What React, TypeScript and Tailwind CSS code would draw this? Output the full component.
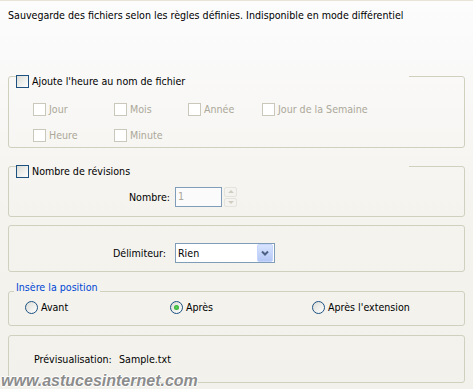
import clsx from "clsx";

// XP-style controls, drawn with borders and gradients
function Check({ disabled }: { disabled?: boolean }) {
  return (
    <span
      className={clsx(
        "block size-[13px] shrink-0 border",
        disabled
          ? "border-[#cac8bb] bg-white"
          : "border-[#1c5180] bg-[linear-gradient(135deg,#dcdcd7,#ffffff)]"
      )}
    />
  );
}

function CheckItem({ label, disabled }: { label: string; disabled?: boolean }) {
  return (
    <div className="flex h-[13px] items-center gap-[3px]">
      <Check disabled={disabled} />
      <span className={clsx("leading-[13px]", disabled ? "text-[#aca899]" : "text-black")}>
        {label}
      </span>
    </div>
  );
}

function Radio({ label, checked }: { label: string; checked?: boolean }) {
  return (
    <div className="flex h-[13px] items-center gap-[3px]">
      <span className="flex size-[13px] shrink-0 items-center justify-center rounded-full border border-[#1c5180] bg-[linear-gradient(135deg,#dcdcd7,#ffffff)]">
        {checked && (
          <span className="size-[5px] rounded-full bg-[radial-gradient(circle,#5fd35f,#21a121)]" />
        )}
      </span>
      <span className="leading-[13px]">{label}</span>
    </div>
  );
}

const group = "m-0 rounded-[3px] border border-[#d0d0bf] p-0";

export default function App() {
  return (
    <div
      className="relative h-[389px] w-[473px] overflow-hidden border-t border-[#e8e5d8] bg-[linear-gradient(to_bottom,#fcfcfd,#f4f3ee_55%,#f2f1eb)] px-2 text-[10.6px] text-black"
      style={{ fontFamily: '"DejaVu Sans Condensed", "Liberation Sans", sans-serif' }}
    >
      <p className="pt-[8px] leading-[13px]">
        Sauvegarde des fichiers selon les règles définies. Indisponible en mode différentiel
      </p>

      {/* Heure dans le nom */}
      <fieldset className={clsx(group, "mt-[53px] w-[457px] pb-[5px]")}>
        <legend className="ml-[7px] h-[2px] w-[393px] p-0">
          <CheckItem label="Ajoute l'heure au nom de fichier" />
        </legend>
        <div className="grid grid-cols-[81px_74px_74px_auto] gap-y-[13px] pt-[26px] pl-[24px]">
          <CheckItem label="Jour" disabled />
          <CheckItem label="Mois" disabled />
          <CheckItem label="Année" disabled />
          <CheckItem label="Jour de la Semaine" disabled />
          <CheckItem label="Heure" disabled />
          <CheckItem label="Minute" disabled />
        </div>
      </fieldset>

      {/* Révisions */}
      <fieldset className={clsx(group, "mt-[17px] w-[457px] pb-[9px]")}>
        <legend className="ml-[7px] h-[2px] w-[393px] p-0">
          <CheckItem label="Nombre de révisions" />
        </legend>
        <div className="flex items-center pt-[20px]">
          <span className="w-[161px] text-right leading-[13px]">Nombre:</span>
          <div className="ml-[5px] flex h-[20px] w-[47px] items-center border border-[#7f9db9] bg-[#fbfbfb] pl-[2px] text-[#aca899]">
            1
          </div>
          <div className="ml-[2px] flex h-[20px] w-[13px] flex-col gap-px">
            <span className="flex flex-1 items-center justify-center rounded-[2px] border border-[#e4e3dc] bg-[#f4f3ef]">
              <span className="border-x-[3px] border-b-[3px] border-x-transparent border-b-[#cfcdc0]" />
            </span>
            <span className="flex flex-1 items-center justify-center rounded-[2px] border border-[#e4e3dc] bg-[#f4f3ef]">
              <span className="border-x-[3px] border-t-[3px] border-x-transparent border-t-[#cfcdc0]" />
            </span>
          </div>
        </div>
      </fieldset>

      {/* Délimiteur */}
      <fieldset className={clsx(group, "mt-[8px] w-[457px] pt-[17px] pb-[8px]")}>
        <div className="flex items-center">
          <span className="w-[157px] text-right leading-[13px]">Délimiteur:</span>
          <div className="ml-[9px] flex h-[20px] w-[100px] items-center justify-between border border-[#7f9db9] bg-white pl-[2px]">
            <span className="leading-[13px]">Rien</span>
            <span className="mr-px flex h-[18px] w-[16px] items-center justify-center rounded-[2px] border border-[#c6d5fb] bg-[linear-gradient(to_bottom,#d8e4fe,#b4c8f6)]">
              <svg width="8" height="6" viewBox="0 0 8 6">
                <path d="M1 1.5 L4 4.5 L7 1.5" fill="none" stroke="#4d6185" strokeWidth="2" />
              </svg>
            </span>
          </div>
        </div>
      </fieldset>

      {/* Position */}
      <fieldset className={clsx(group, "mt-[9px] w-[457px] pb-[11px]")}>
        <legend className="ml-[5px] h-[20px] px-[2px] leading-[13px] text-[#0046d5]">
          Insère la position
        </legend>
        <div className="grid grid-cols-[145px_142px_auto] pl-[16px]">
          <Radio label="Avant" />
          <Radio label="Après" checked />
          <Radio label="Après l'extension" />
        </div>
      </fieldset>

      {/* Aperçu */}
      <fieldset className={clsx(group, "mt-[9px] w-[457px] pt-[17px] pb-[16px]")}>
        <div className="flex pl-[25px] leading-[13px]">
          <span className="w-[85px]">Prévisualisation:</span>
          <span>Sample.txt</span>
        </div>
      </fieldset>

      <span
        className="absolute bottom-[-4px] left-[1px] text-[16px] font-bold italic text-[#8c8c8c] [text-shadow:1px_0_0_#fff,-1px_0_0_#fff,0_1px_0_#fff,0_-1px_0_#fff]"
        style={{ fontFamily: '"Liberation Sans", sans-serif' }}
      >
        www.astucesinternet.com
      </span>
    </div>
  );
}
